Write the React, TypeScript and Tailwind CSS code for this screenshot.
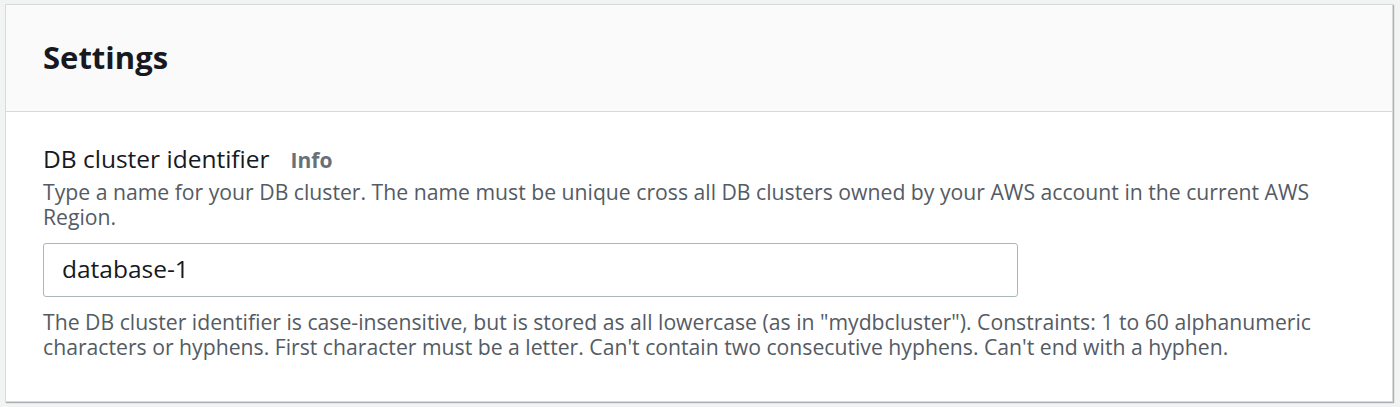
export default function App() {
  return (
    <div className="min-h-[407px] bg-[#f2f3f3] pt-[4px] pl-[5px] pr-[7px] pb-[6px] font-['Open_Sans',sans-serif]">
      <div className="bg-white border border-[#d5dbdb] shadow-[1px_1px_1px_0_rgba(0,28,36,0.3)]">
        <div className="bg-[#fafafa] border-b border-[#d5dbdb] h-[107px] px-[37px] flex items-center">
          <h2 className="text-[31px] font-bold text-[#16191f] leading-none -mt-[2px]">Settings</h2>
        </div>
        <div className="px-[37px] pt-[32px] pb-[42px]">
          <div className="flex items-baseline gap-[21px]">
            <label className="text-[24.5px] text-[#16191f] leading-[30px]">DB cluster identifier</label>
            <span className="text-[21px] font-bold text-[#687078]">Info</span>
          </div>
          <p className="mt-[2px] text-[21.2px] leading-[25px] text-[#545b64]">
            Type a name for your DB cluster. The name must be unique cross all DB clusters owned by your AWS account in the current AWS Region.
          </p>
          <div className="mt-[14px] w-[975px] h-[54px] border border-[#aab7b8] rounded-[3px] flex items-center px-[18px]">
            <span className="text-[24.5px] text-[#16191f]">database-1</span>
          </div>
          <p className="mt-[12px] text-[21.2px] leading-[25px] text-[#545b64]">
            The DB cluster identifier is case-insensitive, but is stored as all lowercase (as in "mydbcluster"). Constraints: 1 to 60 alphanumeric characters or hyphens. First character must be a letter. Can't contain two consecutive hyphens. Can't end with a hyphen.
          </p>
        </div>
      </div>
    </div>
  );
}
